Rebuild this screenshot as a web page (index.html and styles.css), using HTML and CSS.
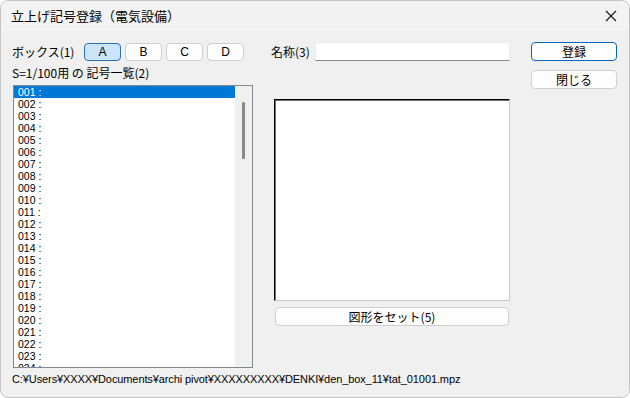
FILE: index.html
```html
<!DOCTYPE html>
<html lang="ja">
<head>
    <meta charset="UTF-8">
    <title>立上げ記号登録（電気設備）</title>
    <link rel="stylesheet" href="styles.css">
</head>
<body>
    <div class="window">
        <div class="titlebar">
            <span class="title">立上げ記号登録（電気設備）</span>
            <svg class="close" width="12" height="12" viewBox="0 0 12 12">
                <path d="M1 1 L11 11 M11 1 L1 11" stroke="#1a1a1a" stroke-width="1.2" fill="none"/>
            </svg>
        </div>
        <div class="content">
            <div class="left-col">
                <div class="box-row">
                    <span class="label box-label">ボックス(1)</span>
                    <button class="btn box-btn active">A</button>
                    <button class="btn box-btn">B</button>
                    <button class="btn box-btn">C</button>
                    <button class="btn box-btn">D</button>
                </div>
                <div class="label list-label">S=1/100用 の 記号一覧(2)</div>
                <div class="listbox">
                    <div class="items" id="items">
                        <!-- rows filled by script -->
                    </div>
                    <div class="scrollbar">
                        <div class="thumb"></div>
                    </div>
                </div>
            </div>
            <div class="mid-col">
                <div class="name-row">
                    <span class="label">名称(3)</span>
                    <div class="name-input"></div>
                </div>
                <div class="preview"></div>
                <button class="btn set-btn">図形をセット(5)</button>
            </div>
            <div class="right-col">
                <button class="btn side-btn primary">登録</button>
                <button class="btn side-btn">閉じる</button>
            </div>
        </div>
        <div class="path">C:¥Users¥XXXX¥Documents¥archi pivot¥XXXXXXXXX¥DENKI¥den_box_11¥tat_01001.mpz</div>
    </div>

    <script>
        const items = document.getElementById('items');
        for (let i = 1; i <= 24; i++) {
            const row = document.createElement('div');
            row.className = 'item' + (i === 1 ? ' selected' : '');
            row.textContent = String(i).padStart(3, '0') + ' :';
            items.appendChild(row);
        }
    </script>
</body>
</html>
```

FILE: styles.css
```css
body {
    margin: 0;
    background: #ffffff;
    font-family: "Noto Sans CJK JP", "Noto Sans", sans-serif;
    color: #000;
}

.window {
    width: 630px;
    height: 398px;
    box-sizing: border-box;
    border: 1px solid #c4c4c4;
    border-radius: 8px;
    background: #f0f0f0;
    overflow: hidden;
    display: flex;
    flex-direction: column;
}

.titlebar {
    height: 30px;
    flex: none;
    display: flex;
    align-items: center;
    justify-content: space-between;
    padding: 0 12px 0 10px;
    background: #f3f3f3;
    font-size: 13px;
}

.title {
    margin-top: -1px;
}

.content {
    display: flex;
    padding: 11px 0 0 11px;
    height: 327px;
}

.label {
    font-size: 12px;
    line-height: 14px;
}

.btn {
    font-family: "Noto Sans CJK JP", "Noto Sans", sans-serif;
    font-size: 12px;
    padding: 0;
    background: #fdfdfd;
    border: 1px solid #cfcfcf;
    border-radius: 4px;
    color: #000;
    box-sizing: border-box;
    line-height: 14px;
}

.left-col {
    width: 242px;
}

.box-row {
    display: flex;
    align-items: center;
    height: 19px;
}

.box-label {
    width: 72px;
}

.box-btn {
    width: 37px;
    height: 18px;
    margin-right: 4px;
    font-family: "Liberation Sans", Arial, sans-serif;
}

.box-btn.active {
    background: #cce4f7;
    border-color: #2a6fb0;
}

.list-label {
    margin-top: 5px;
    height: 14px;
}

.listbox {
    margin: 5px 0 0 1px;
    width: 240px;
    height: 283px;
    box-sizing: border-box;
    border: 1px solid #828790;
    background: #fff;
    display: flex;
    overflow: hidden;
}

.items {
    flex: 1;
    overflow: hidden;
}

.item {
    height: 12px;
    line-height: 12px;
    padding-left: 4px;
    font-family: "Liberation Sans", Arial, sans-serif;
    font-size: 10.5px;
    white-space: nowrap;
}

.item.selected {
    background: #0078d7;
    color: #fff;
}

.scrollbar {
    width: 17px;
    flex: none;
    background: #f0f0f0;
}

.thumb {
    width: 3px;
    height: 57px;
    margin: 16px 0 0 7px;
    background: #8a8a8a;
    border-radius: 1px;
}

.mid-col {
    width: 239px;
    margin-left: 17px;
}

.name-row {
    display: flex;
    align-items: center;
    height: 19px;
}

.name-row .label {
    width: 44px;
}

.name-input {
    width: 195px;
    height: 19px;
    box-sizing: border-box;
    background: #fff;
    border: 1px solid #ececec;
    border-bottom: 1px solid #8a8a8a;
}

.preview {
    margin: 38px 0 0 3px;
    width: 236px;
    height: 202px;
    box-sizing: border-box;
    background: #fff;
    border-top: 1px solid #000;
    border-left: 1px solid #000;
    border-right: 1px solid #c8c8c8;
    border-bottom: 1px solid #c8c8c8;
    box-shadow: inset 1px 1px 0 #707070;
}

.set-btn {
    display: block;
    margin: 6px 0 0 4px;
    width: 234px;
    height: 19px;
}

.right-col {
    margin-left: 21px;
    width: 86px;
    display: flex;
    flex-direction: column;
    gap: 9px;
}

.side-btn {
    height: 19px;
}

.side-btn.primary {
    border: 1px solid #0067c0;
}

.path {
    padding: 4px 0 0 11px;
    font-size: 11px;
    font-family: "Liberation Sans", Arial, sans-serif;
    letter-spacing: -0.1px;
    white-space: nowrap;
}
```
